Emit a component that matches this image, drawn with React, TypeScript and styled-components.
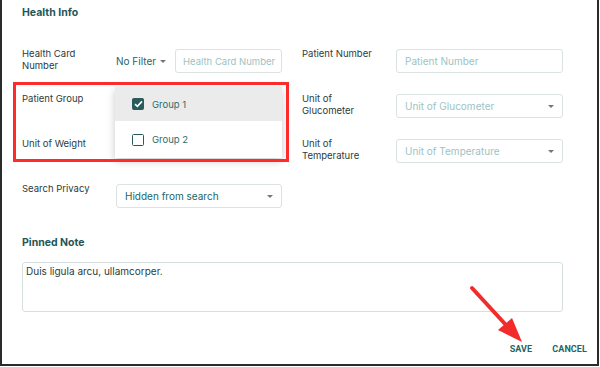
import React from 'react'
import styled, { createGlobalStyle } from 'styled-components'

const Global = createGlobalStyle`
  html, body { margin: 0; padding: 0; background: #fff; }
  body { font-family: Inter, "Noto Sans", sans-serif; }
  * { box-sizing: border-box; }
`

const Frame = styled.div`
  position: relative;
  width: 599px;
  height: 366px;
  border-left: 2px solid #2b2b2b;
  border-right: 2px solid #2b2b2b;
  border-bottom: 2px solid #2b2b2b;
  padding: 6px 34px 0 20px;
  background: #fff;
`

const SectionTitle = styled.h3<{ $top?: number }>`
  margin: 0;
  margin-top: ${p => p.$top || 0}px;
  font-size: 10.5px;
  font-weight: 700;
  color: #1f5656;
  line-height: 14px;
`

const FormGrid = styled.div`
  display: grid;
  grid-template-columns: 94px 166px 114px 167px;
  margin-top: 29px;
  row-gap: 21px;
`

const Label = styled.div<{ $indent?: boolean }>`
  font-size: 9.5px;
  line-height: 12px;
  color: #2c3b3c;
  margin-top: -1px;
  padding-left: ${p => (p.$indent ? 20 : 0)}px;
`

const Field = styled.div`
  height: 24px;
  display: flex;
  align-items: center;
`

const Input = styled.div<{ $muted?: boolean; $tight?: boolean }>`
  flex: 1;
  min-width: 0;
  height: 24px;
  border: 1px solid #dbe2e2;
  border-radius: 3px;
  display: flex;
  align-items: center;
  padding: 0 ${p => (p.$tight ? 7 : 8)}px;
  font-size: ${p => (p.$tight ? 9.5 : 10)}px;
  color: ${p => (p.$muted ? '#9cc3c3' : '#236565')};
  justify-content: space-between;
  white-space: nowrap;
  overflow: hidden;
`

const Caret = styled.span<{ $gap?: number }>`
  width: 0;
  height: 0;
  border-left: 3.5px solid transparent;
  border-right: 3.5px solid transparent;
  border-top: 3.5px solid #707878;
  margin-left: ${p => p.$gap ?? 6}px;
`

const FilterButton = styled.div`
  display: flex;
  align-items: center;
  font-size: 10px;
  color: #236565;
  margin-right: 9px;
  white-space: nowrap;
`

const Menu = styled.div`
  position: absolute;
  left: 113px;
  top: 87px;
  width: 167px;
  background: #fff;
  box-shadow: 0 3px 8px rgba(0, 0, 0, 0.22);
  z-index: 2;
`

const MenuItem = styled.div<{ $active?: boolean }>`
  height: ${p => (p.$active ? 34 : 37)}px;
  display: flex;
  align-items: center;
  padding-left: 17px;
  background: ${p => (p.$active ? '#ebebeb' : '#fff')};
  font-size: 9.5px;
  color: #2b6d6d;
`

const Box = styled.span<{ $checked?: boolean }>`
  width: 12px;
  height: 12px;
  border-radius: 1.5px;
  margin-right: 8px;
  display: inline-flex;
  align-items: center;
  justify-content: center;
  background: ${p => (p.$checked ? '#2a5b5c' : '#fff')};
  border: 1.5px solid #2a5b5c;
`

const Highlight = styled.div`
  position: absolute;
  left: 11px;
  top: 82px;
  width: 276px;
  height: 80px;
  border: 3px solid #ff2b2b;
  z-index: 3;
  pointer-events: none;
`

const NoteArea = styled.div`
  margin-top: 12px;
  width: 541px;
  height: 50px;
  border: 1px solid #d6dfe0;
  border-radius: 3px;
  padding: 2px 3px;
  font-size: 10px;
  color: #2c3b3c;
`

const Actions = styled.div`
  display: flex;
  justify-content: flex-end;
  gap: 20px;
  margin-top: 32px;
  margin-right: -24px;
`

const ActionButton = styled.span`
  font-family: Roboto, "Liberation Sans", sans-serif;
  font-size: 9px;
  font-weight: 700;
  color: #236565;
  letter-spacing: 0.1px;
`

const Arrow = styled.svg`
  position: absolute;
  left: 463px;
  top: 282px;
  z-index: 3;
`

const Check = () => (
  <svg width="9" height="8" viewBox="0 0 9 8">
    <path d="M1 4.2 L3.4 6.4 L8 1.4" stroke="#fff" strokeWidth="1.6" fill="none" />
  </svg>
)

const App = () => {
  return (
    <>
      <Global />
      <Frame>
        <SectionTitle>Health Info</SectionTitle>
        <FormGrid>
          <Label>Health Card<br />Number</Label>
          <Field>
            <FilterButton>No Filter <Caret $gap={4} /></FilterButton>
            <Input $muted $tight>Health Card Number</Input>
          </Field>
          <Label $indent>Patient Number</Label>
          <Field><Input $muted>Patient Number</Input></Field>

          <Label>Patient Group</Label>
          <Field />
          <Label $indent>Unit of<br />Glucometer</Label>
          <Field><Input $muted>Unit of Glucometer <Caret /></Input></Field>

          <Label>Unit of Weight</Label>
          <Field />
          <Label $indent>Unit of<br />Temperature</Label>
          <Field><Input $muted>Unit of Temperature <Caret /></Input></Field>

          <Label>Search Privacy</Label>
          <Field><Input>Hidden from search <Caret /></Input></Field>
          <div />
          <div />
        </FormGrid>

        <SectionTitle $top={28}>Pinned Note</SectionTitle>
        <NoteArea>Duis ligula arcu, ullamcorper.</NoteArea>

        <Actions>
          <ActionButton>SAVE</ActionButton>
          <ActionButton>CANCEL</ActionButton>
        </Actions>

        <Menu>
          <MenuItem $active><Box $checked><Check /></Box>Group 1</MenuItem>
          <MenuItem><Box />Group 2</MenuItem>
        </Menu>
        <Highlight />

        <Arrow width="70" height="70" viewBox="0 0 70 70">
          <line x1="7" y1="6" x2="41" y2="43" stroke="#f22b2b" strokeWidth="4" strokeLinecap="round" />
          <polygon points="57,60 33,48 47,36" fill="#f22b2b" />
        </Arrow>
      </Frame>
    </>
  )
}

export default App
